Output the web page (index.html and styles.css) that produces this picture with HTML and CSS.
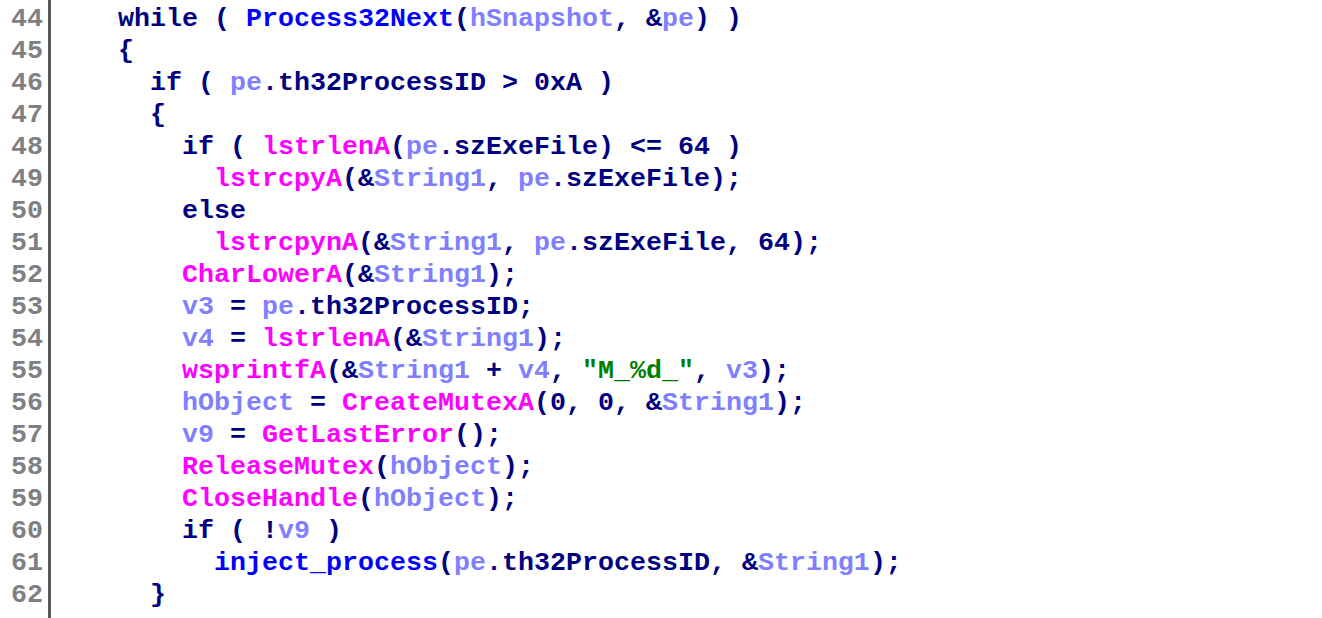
FILE: index.html
```html
<!DOCTYPE html>
<html>
<head>
<meta charset="utf-8">
<link rel="stylesheet" href="styles.css">
</head>
<body>
<div class="view">
  <div class="gutter">
    <div class="ln">44</div><div class="ln">45</div><div class="ln">46</div><div class="ln">47</div>
    <div class="ln">48</div><div class="ln">49</div><div class="ln">50</div><div class="ln">51</div>
    <div class="ln">52</div><div class="ln">53</div><div class="ln">54</div><div class="ln">55</div>
    <div class="ln">56</div><div class="ln">57</div><div class="ln">58</div><div class="ln">59</div>
    <div class="ln">60</div><div class="ln">61</div><div class="ln">62</div>
  </div>
  <div class="code">
<div class="row">while ( <span class="fn">Process32Next</span>(<span class="v">hSnapshot</span>, &amp;<span class="v">pe</span>) )</div>
<div class="row">{</div>
<div class="row">  if ( <span class="v">pe</span>.th32ProcessID &gt; 0xA )</div>
<div class="row">  {</div>
<div class="row">    if ( <span class="im">lstrlenA</span>(<span class="v">pe</span>.szExeFile) &lt;= 64 )</div>
<div class="row">      <span class="im">lstrcpyA</span>(&amp;<span class="v">String1</span>, <span class="v">pe</span>.szExeFile);</div>
<div class="row">    else</div>
<div class="row">      <span class="im">lstrcpynA</span>(&amp;<span class="v">String1</span>, <span class="v">pe</span>.szExeFile, 64);</div>
<div class="row">    <span class="im">CharLowerA</span>(&amp;<span class="v">String1</span>);</div>
<div class="row">    <span class="v">v3</span> = <span class="v">pe</span>.th32ProcessID;</div>
<div class="row">    <span class="v">v4</span> = <span class="im">lstrlenA</span>(&amp;<span class="v">String1</span>);</div>
<div class="row">    <span class="im">wsprintfA</span>(&amp;<span class="v">String1</span> + <span class="v">v4</span>, <span class="str">"M_%d_"</span>, <span class="v">v3</span>);</div>
<div class="row">    <span class="v">hObject</span> = <span class="im">CreateMutexA</span>(0, 0, &amp;<span class="v">String1</span>);</div>
<div class="row">    <span class="v">v9</span> = <span class="im">GetLastError</span>();</div>
<div class="row">    <span class="im">ReleaseMutex</span>(<span class="v">hObject</span>);</div>
<div class="row">    <span class="im">CloseHandle</span>(<span class="v">hObject</span>);</div>
<div class="row">    if ( !<span class="v">v9</span> )</div>
<div class="row">      <span class="fn">inject_process</span>(<span class="v">pe</span>.th32ProcessID, &amp;<span class="v">String1</span>);</div>
<div class="row">  }</div>
  </div>
</div>
</body>
</html>
```
FILE: styles.css
```css
html, body {
  margin: 0;
  padding: 0;
  background: #ffffff;
}
body {
  width: 1322px;
  height: 618px;
  overflow: hidden;
}
.view {
  display: flex;
  height: 618px;
  font-family: "Liberation Mono", "DejaVu Sans Mono", monospace;
  font-weight: bold;
  font-size: 26.66px;
  line-height: 32px;
}
.gutter {
  width: 43px;
  padding-right: 5px;
  padding-top: 3px;
  text-align: right;
  color: #808080;
}
.ln {
  height: 32px;
}
.code {
  border-left: 3px solid #585858;
  padding-left: 67px;
  padding-top: 3px;
  color: #000080;
  flex: 1;
}
.row {
  height: 32px;
  white-space: pre;
}
.fn { color: #0000ff; }
.im { color: #ff00ff; }
.v { color: #8080ff; }
.str { color: #008000; }
```
